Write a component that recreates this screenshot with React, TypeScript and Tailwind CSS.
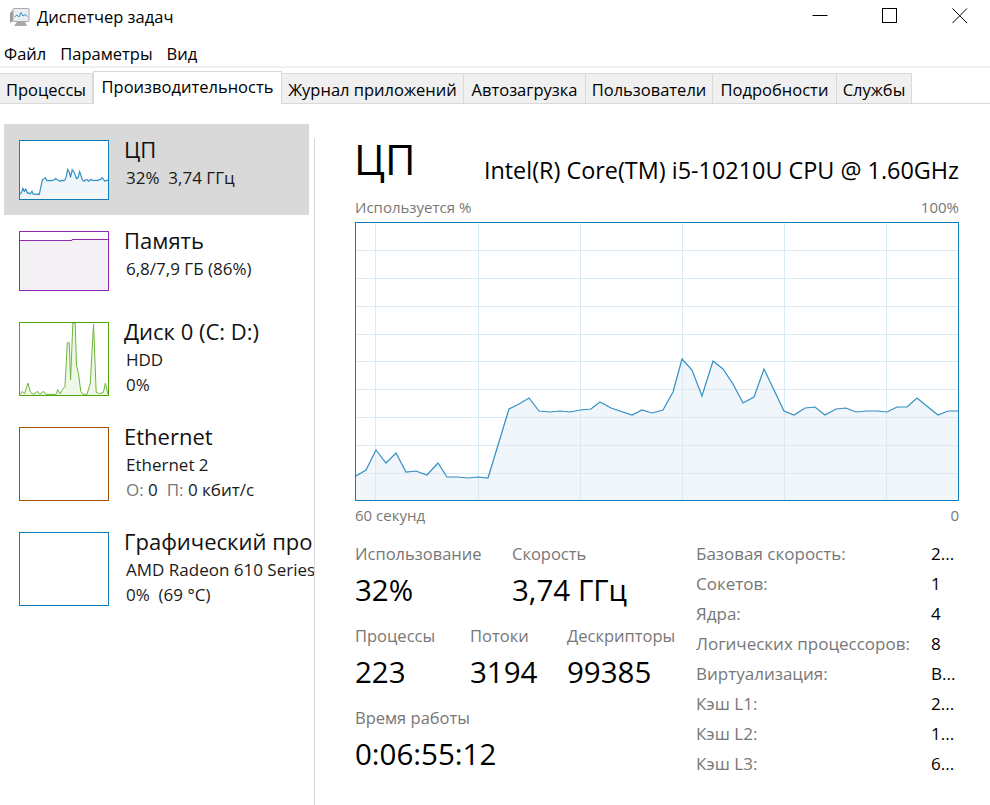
const cpuPoints: [number, number][] = [
  [356, 476], [366, 470], [376, 450], [386, 463], [396, 453], [406, 472], [416, 471], [427, 475], [438, 463], [447, 477],
  [457, 477], [468, 478], [478, 477], [488, 478], [509, 409], [519, 404], [529, 398], [539, 411], [550, 412], [560, 411],
  [570, 412], [580, 410], [591, 409], [600, 402], [611, 408], [632, 415], [642, 410], [652, 413], [663, 410], [673, 392],
  [682, 359], [692, 370], [702, 396], [713, 361], [723, 369], [733, 384], [743, 403], [754, 397], [764, 369], [784, 411],
  [794, 415], [805, 408], [815, 407], [825, 415], [836, 409], [846, 408], [856, 412], [867, 411], [877, 411], [887, 412],
  [897, 407], [907, 407], [917, 398], [928, 407], [938, 415], [948, 411], [958, 411],
];
const cpuLine = cpuPoints.map((p) => p.join(",")).join(" ");
const cpuFill = `356,500 ${cpuLine} 958,500`;

const diskPoints = "58,524 65,515 72,522 82,490 90,518 98,524 112,515 118,524 130,515 137,524 168,524 173,510 180,522 187,510 195,500 202,367 208,367 212,480 219,307 226,307 230,435 236,460 243,515 250,524 262,524 272,490 282,310 290,518 300,522 312,518 318,490 326,524";

const hLines = [250, 278, 306, 334, 361, 389, 417, 445, 473];
const vLines = [375, 478, 580, 682, 784, 886];

const tabs = [
  { label: "Процессы", w: "w-[93px]", active: false },
  { label: "Производительность", w: "w-[189px]", active: true },
  { label: "Журнал приложений", w: "w-[182px]", active: false },
  { label: "Автозагрузка", w: "w-[122px]", active: false },
  { label: "Пользователи", w: "w-[127px]", active: false },
  { label: "Подробности", w: "w-[124px]", active: false },
  { label: "Службы", w: "w-[75px]", active: false },
];

const specs = [
  ["Базовая скорость:", "2..."],
  ["Сокетов:", "1"],
  ["Ядра:", "4"],
  ["Логических процессоров:", "8"],
  ["Виртуализация:", "В..."],
  ["Кэш L1:", "2..."],
  ["Кэш L2:", "1..."],
  ["Кэш L3:", "6..."],
];

function AppIcon() {
  return (
    <svg width="22" height="22" viewBox="0 0 22 22" className="shrink-0">
      <path d="M1 7 L4 4 V15 L1 17 Z" fill="#9a9a9a" />
      <rect x="4" y="2.5" width="16" height="13" rx="1" fill="#e8eef2" stroke="#a8a8a8" />
      <path d="M5.5 11 L8 9 L10 11 L12 6.5 L14 10 L16 8.5 L18.5 10.5" fill="none" stroke="#3a90c8" strokeWidth="1" />
      <path d="M8 16 H16 L18 20 H5 Z" fill="#a9a9a9" />
    </svg>
  );
}

function WindowControls() {
  return (
    <div className="flex items-start pt-2 pr-[22px] gap-[54px]">
      <svg width="16" height="16" viewBox="0 0 16 16" className="text-black">
        <path d="M0.5 7.5 H15.5" stroke="currentColor" fill="none" />
      </svg>
      <svg width="16" height="16" viewBox="0 0 16 16" className="text-black">
        <rect x="0.5" y="0.5" width="14" height="14" stroke="currentColor" fill="none" />
      </svg>
      <svg width="16" height="16" viewBox="0 0 16 16" className="text-black">
        <path d="M0.5 0.5 L15 15 M15 0.5 L0.5 15" stroke="currentColor" fill="none" />
      </svg>
    </div>
  );
}

function CpuGraph({ small }: { small?: boolean }) {
  return (
    <svg viewBox="356 223 602 277" preserveAspectRatio="none" className="block w-full h-full">
      <polygon points={cpuFill} fill="#f1f6fa" />
      {!small &&
        hLines.map((y) => <line key={y} x1="356" x2="958" y1={y + 0.5} y2={y + 0.5} stroke="#d9eaf4" />)}
      {!small &&
        vLines.map((x) => <line key={x} x1={x + 0.5} x2={x + 0.5} y1="223" y2="500" stroke="#d9eaf4" />)}
      <polyline points={cpuLine} fill="none" stroke="#117dbb" strokeWidth="1.2" vectorEffect="non-scaling-stroke" opacity="0.85" />
    </svg>
  );
}

function SideItem({
  graph,
  border,
  h,
  selected,
  title,
  children,
}: {
  graph: React.ReactNode;
  border: string;
  h: string;
  selected?: boolean;
  title: string;
  children: React.ReactNode;
}) {
  return (
    <div className={`ml-1 w-[305px] flex pt-4 pl-[15px] ${selected ? "bg-[#d9d9d9] h-[91px]" : h === "h-[60px]" ? "h-[91px]" : "h-[105px]"}`}>
      <div className={`w-[90px] shrink-0 border ${border} ${h} ${selected ? "bg-white" : ""}`}>{graph}</div>
      <div className="ml-[15px] whitespace-nowrap">
        <div className="text-[22px] leading-[24px] -mt-[3px] text-[#111]">{title}</div>
        <div className="text-[17px] leading-[25px] mt-[4px] pl-[2px] text-[#1a1a1a]">{children}</div>
      </div>
    </div>
  );
}

function Stat({ label, value, w }: { label: string; value: string; w: string }) {
  return (
    <div className={w}>
      <div className="text-[16.5px] leading-[20px] text-[#777]">{label}</div>
      <div className="text-[29.5px] leading-[36px] mt-[8px] text-black">{value}</div>
    </div>
  );
}

export default function App() {
  return (
    <div className="w-[990px] h-[805px] overflow-hidden bg-white text-black font-['Open_Sans',sans-serif] flex flex-col">
      <div className="h-[37px] flex items-start justify-between">
        <div className="flex items-center pl-[9px] pt-[6px] gap-[6px]">
          <AppIcon />
          <span className="text-[16.5px] leading-[22px]">Диспетчер задач</span>
        </div>
        <WindowControls />
      </div>
      <div className="h-[29px] flex items-center pl-1 pt-[6px] gap-[14px] text-[16.5px]">
        <span>Файл</span>
        <span>Параметры</span>
        <span>Вид</span>
      </div>
      <div className="h-[2px] bg-[#f0f0f0]" />
      <div className="h-[36px] flex items-end border-b border-[#d9d9d9] shrink-0">
        {tabs.map((t) =>
          t.active ? (
            <div key={t.label} className={`${t.w} h-[33px] -mb-px bg-white border border-b-0 border-[#d9d9d9] text-center text-[16.5px] leading-[30px]`}>
              {t.label}
            </div>
          ) : (
            <div key={t.label} className={`${t.w} h-[30px] bg-[#f0f0f0] border-t border-r border-[#d9d9d9] text-center text-[16.5px] leading-[31px]`}>
              {t.label}
            </div>
          ),
        )}
      </div>
      <div className="flex flex-1 pt-5 min-h-0">
        <div className="w-[314px] shrink-0 overflow-hidden">
          <SideItem selected border="border-[#117dbb]" h="h-[60px]" title="ЦП" graph={<CpuGraph small />}>
            32%&nbsp; 3,74 ГГц
          </SideItem>
          <SideItem
            border="border-[#9528b4]"
            h="h-[60px]"
            title="Память"
            graph={
              <svg viewBox="0 0 88 58" preserveAspectRatio="none" className="block w-full h-full">
                <polygon points="0,8.5 52,8.5 52,7.5 88,7.5 88,58 0,58" fill="#f4f2f4" />
                <polyline points="0,8.5 52,8.5 52,7.5 88,7.5" fill="none" stroke="#9528b4" />
              </svg>
            }
          >
            6,8/7,9 ГБ (86%)
          </SideItem>
          <SideItem
            border="border-[#4da60c]"
            h="h-[74px]"
            title="Диск 0 (C: D:)"
            graph={
              <svg viewBox="58 307 268 219" preserveAspectRatio="none" className="block w-full h-full">
                <polygon points={`58,526 ${diskPoints} 326,526`} fill="#eff7e9" />
                <polyline points={diskPoints} fill="none" stroke="#4da60c" strokeWidth="1" vectorEffect="non-scaling-stroke" opacity="0.8" />
              </svg>
            }
          >
            <div>HDD</div>
            <div>0%</div>
          </SideItem>
          <SideItem border="border-[#a74f01]" h="h-[74px]" title="Ethernet" graph={null}>
            <div>Ethernet 2</div>
            <div>
              <span className="text-[#777]">О:</span> 0&nbsp; <span className="text-[#777]">П:</span> 0 кбит/с
            </div>
          </SideItem>
          <SideItem border="border-[#117dbb]" h="h-[74px]" title="Графический процессор 0" graph={null}>
            <div>AMD Radeon 610 Series</div>
            <div>0%&nbsp; (69 °C)</div>
          </SideItem>
        </div>
        <div className="w-px mt-[14px] bg-[#d9d9d9] shrink-0" />
        <div className="ml-10 w-[604px] shrink-0">
          <div className="flex items-end justify-between h-[64px] pb-[2px]">
            <span className="text-[42px] leading-[54px] -ml-[1px]">ЦП</span>
            <span className="text-[23.4px] leading-[30px] pb-[1px]">Intel(R) Core(TM) i5-10210U CPU @ 1.60GHz</span>
          </div>
          <div className="flex justify-between h-[34px] pt-[9px] text-[15px] leading-[20px] text-[#777]">
            <span>Используется %</span>
            <span>100%</span>
          </div>
          <div className="h-[279px] border border-[#117dbb]">
            <CpuGraph />
          </div>
          <div className="flex justify-between pt-1 text-[15px] leading-[20px] text-[#777]">
            <span>60 секунд</span>
            <span>0</span>
          </div>
          <div className="flex mt-[19px]">
            <div className="w-[341px]">
              <div className="flex">
                <Stat w="w-[157px]" label="Использование" value="32%" />
                <Stat w="w-[180px]" label="Скорость" value="3,74 ГГц" />
              </div>
              <div className="flex mt-[18px]">
                <Stat w="w-[115px]" label="Процессы" value="223" />
                <Stat w="w-[97px]" label="Потоки" value="3194" />
                <Stat w="w-[120px]" label="Дескрипторы" value="99385" />
              </div>
              <div className="mt-[18px]">
                <Stat w="w-[200px]" label="Время работы" value="0:06:55:12" />
              </div>
            </div>
            <div className="flex flex-col -mt-[5px]">
              {specs.map(([k, v]) => (
                <div key={k} className="flex h-[30px] items-center text-[17px]">
                  <span className="w-[235px] text-[#777] whitespace-nowrap">{k}</span>
                  <span>{v}</span>
                </div>
              ))}
            </div>
          </div>
        </div>
      </div>
    </div>
  );
}
